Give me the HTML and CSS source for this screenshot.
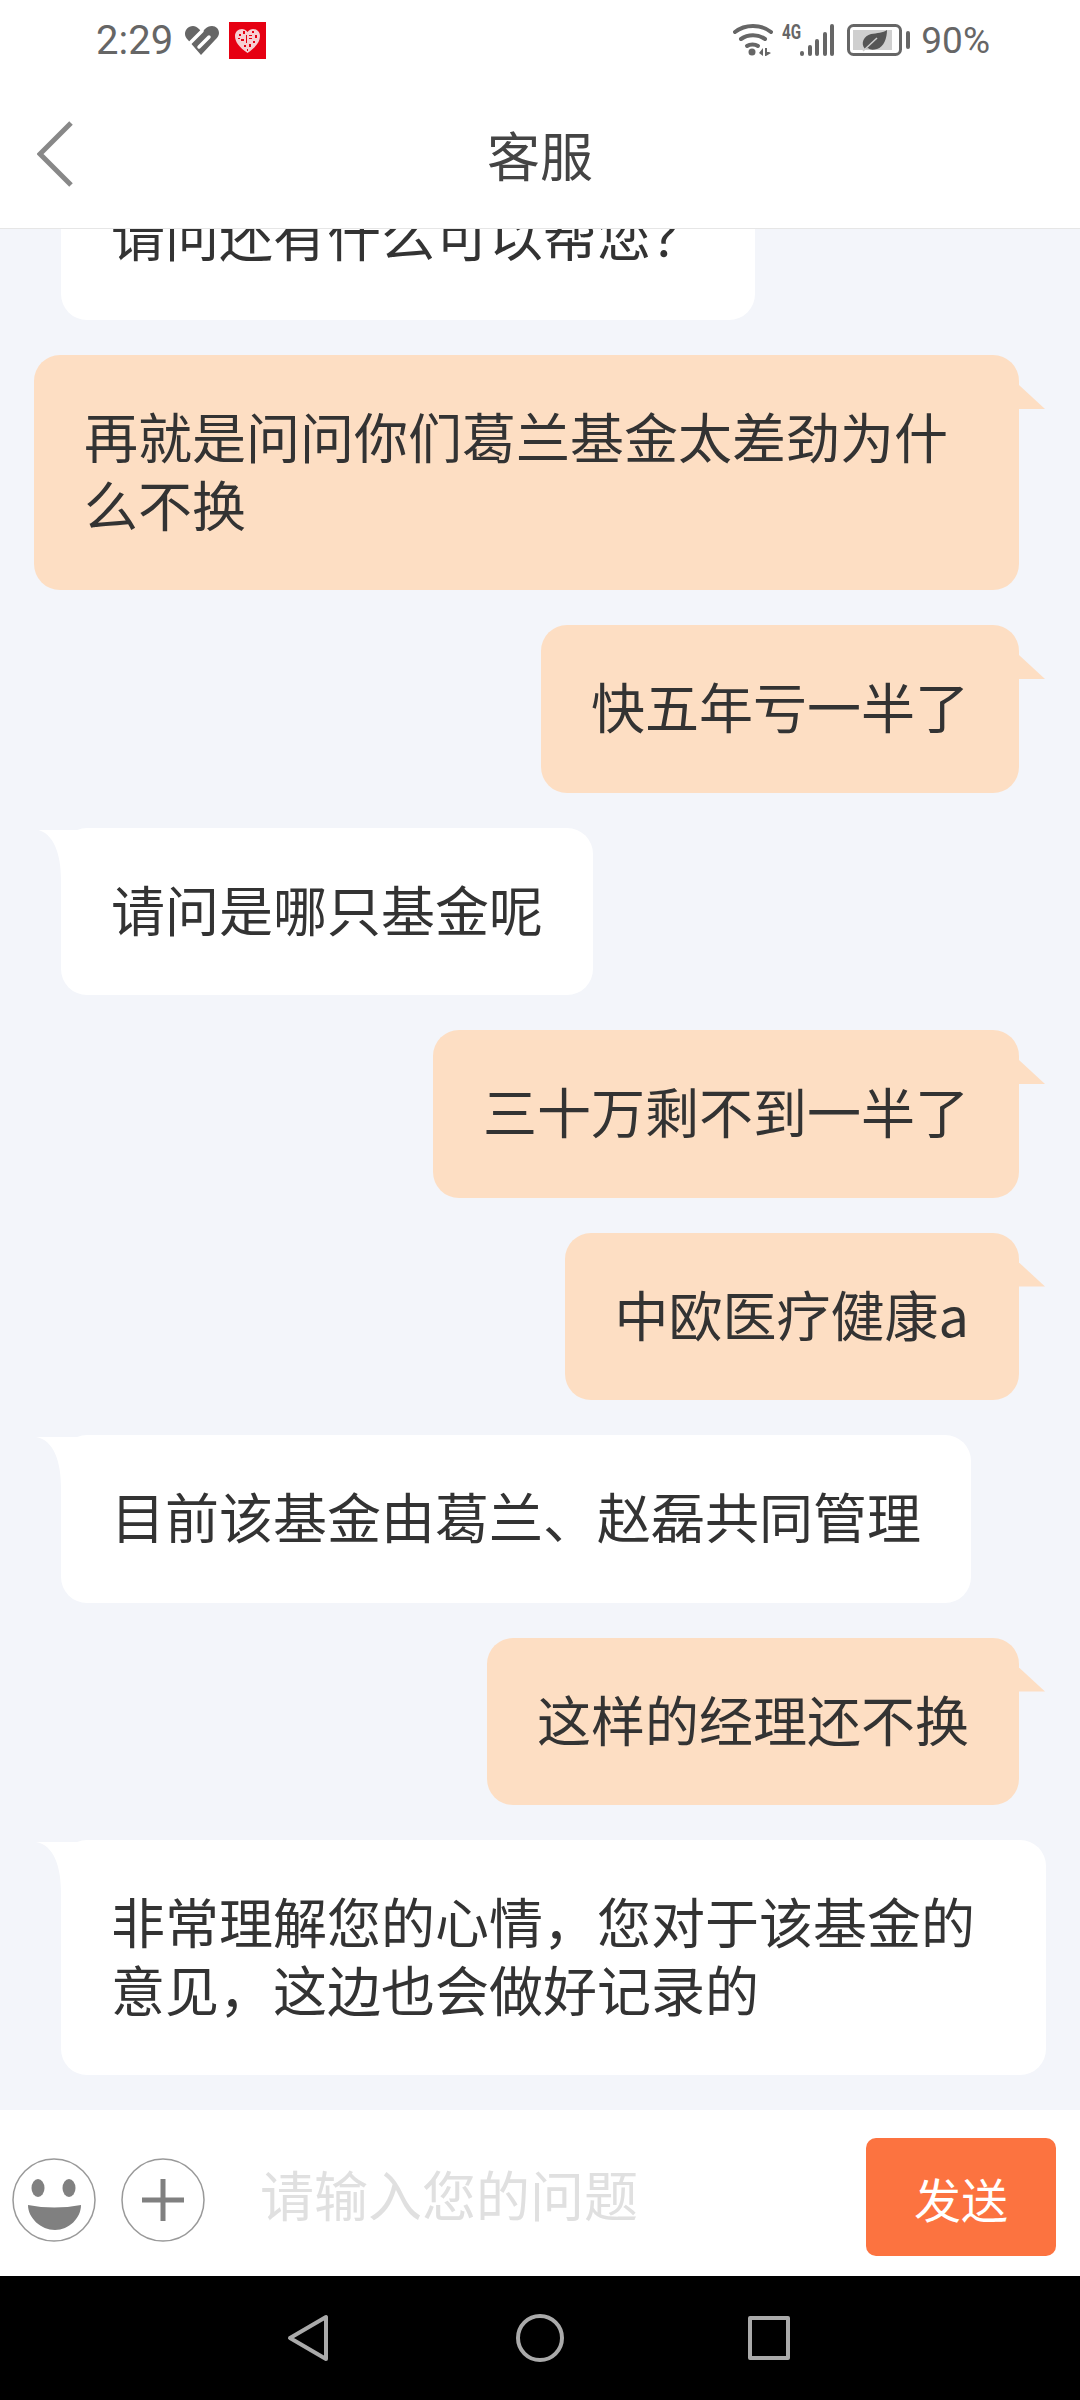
FILE: index.html
```html
<!DOCTYPE html>
<html lang="zh-CN">
<head>
  <meta charset="UTF-8">
  <meta name="viewport" content="width=device-width, initial-scale=1.0">
  <title>客服</title>
  <link rel="stylesheet" href="styles.css">
</head>
<body>
  <div class="phone">
    <div class="statusBar">
      <div class="statusLeft">
        <span class="time">2:29</span>
        <svg class="healthIcon" width="34" height="29" viewBox="0 0 34 29">
          <path d="M8 0C3 0 0 4 0 8c0 2 1 4 3 6l13 15 14-15c3-3 4-5 4-7 0-4-3-7-7-7-3 0-5 1-7 3l-3 3-3-3C12 1 10 0 8 0z" fill="#666"/>
          <path d="M5 17L17 5M14 21l10-10" stroke="#fff" stroke-width="3.500" stroke-linecap="round"/>
        </svg>
        <svg class="appIcon" width="37" height="37" viewBox="0 0 37 37">
          <rect width="37" height="37" fill="#e60012"/>
          <path d="M18.500 31C10 25 6 20 6 14c0-4 3-7 7-7 2 0 4 1 5.500 3C20 8 22 7 24 7c4 0 7 3 7 7 0 6-4 11-12.500 17z" fill="#f6cfd3"/>
          <path d="M10 12h2v2h-2zM14 9h2v3h-2zM12 17h3v2h-3zM17 13h1v8h-1zM20 13h3v1h-3zM20 16h3v1h-3zM23 9h2v2h-2zM26 13h2v3h-2zM24 19h2v2h-2zM15 23h2v2h-2zM20 22h2v3h-2zM18 27h1v2h-1zM9 16h2v1h-2z" fill="#e60012"/>
        </svg>
      </div>
      <div class="statusRight">
        <svg class="wifiIcon" width="40" height="32" viewBox="0 0 40 32">
          <g fill="none" stroke="#666" stroke-width="4" stroke-linecap="round">
            <path d="M2 8c10-8 26-8 36 0"/>
            <path d="M8 15c7-5 17-5 24 0"/>
            <path d="M14 22c3-2 8-2 11 0"/>
          </g>
          <circle cx="19" cy="28" r="3.500" fill="#666"/>
          <path d="M30 24v8l-4-3zM32 24v8h1l5-3-2-1h-2v-4z" fill="#666"/>
        </svg>
        <span class="netLabel">4G</span>
        <div class="signal">
          <i class="bar1"></i><i class="bar2"></i><i class="bar3"></i><i class="bar4"></i><i class="bar5"></i>
        </div>
        <svg class="batteryIcon" width="64" height="32" viewBox="0 0 64 32">
          <rect x="1.500" y="1.500" width="52" height="29" rx="5" fill="none" stroke="#666" stroke-width="3"/>
          <rect x="6" y="6" width="39" height="20" fill="#cfcfcf"/>
          <path d="M18 25c-5-6-1-13 6-15 6-1 12-1 16-4 0 8-3 17-10 19-4 1-7 1-9-1z" fill="#555"/>
          <path d="M16 27l14-13" stroke="#cfcfcf" stroke-width="1.500"/>
          <rect x="59" y="7" width="4" height="18" rx="2" fill="#666"/>
        </svg>
        <span class="battery">90%</span>
      </div>
    </div>
    <header class="navBar">
      <svg class="backIcon" width="36" height="66" viewBox="0 0 36 66">
        <path d="M34 2L3 33l31 31" fill="none" stroke="#888" stroke-width="5"/>
      </svg>
      <h1 class="navTitle">客服</h1>
    </header>
    <main class="chat">
      <div class="bubble left noTail">请问还有什么可以帮您？</div>
      <div class="bubble right">再就是问问你们葛兰基金太差劲为什么不换</div>
      <div class="bubble right">快五年亏一半了</div>
      <div class="bubble left">请问是哪只基金呢</div>
      <div class="bubble right">三十万剩不到一半了</div>
      <div class="bubble right">中欧医疗健康a</div>
      <div class="bubble left">目前该基金由葛兰、赵磊共同管理</div>
      <div class="bubble right">这样的经理还不换</div>
      <div class="bubble left">非常理解您的心情，您对于该基金的意见，这边也会做好记录的</div>
    </main>
    <footer class="inputBar">
      <svg class="roundIcon" width="84" height="84" viewBox="0 0 84 84">
        <circle cx="42" cy="42" r="41" fill="#fff" stroke="#999" stroke-width="1.500"/>
        <ellipse cx="26" cy="30" rx="6.500" ry="9" fill="#808080"/>
        <ellipse cx="57" cy="30" rx="6.500" ry="9" fill="#808080"/>
        <path d="M16 47q26 5 53 0c0 13-12 25-26 25S16 60 16 47z" fill="#808080"/>
      </svg>
      <svg class="roundIcon plus" width="84" height="84" viewBox="0 0 84 84">
        <circle cx="42" cy="42" r="41" fill="#fff" stroke="#999" stroke-width="1.500"/>
        <path d="M42 21v42M21 42h42" stroke="#808080" stroke-width="5"/>
      </svg>
      <div class="placeholder">请输入您的问题</div>
      <button class="sendButton">发送</button>
    </footer>
    <nav class="softKeys">
      <svg width="42" height="48" viewBox="0 0 42 48">
        <path d="M39 3v42L3 24z" fill="none" stroke="#aaa" stroke-width="4" stroke-linejoin="round"/>
      </svg>
      <svg width="48" height="48" viewBox="0 0 48 48">
        <circle cx="24" cy="24" r="22" fill="none" stroke="#aaa" stroke-width="4"/>
      </svg>
      <svg class="recentKey" width="42" height="44" viewBox="0 0 42 44">
        <rect x="2" y="2" width="38" height="40" fill="none" stroke="#aaa" stroke-width="4" stroke-linejoin="round"/>
      </svg>
    </nav>
  </div>
</body>
</html>
```

FILE: styles.css
```css
* {
  margin: 0;
  padding: 0;
  box-sizing: border-box;
}
body {
  width: 1080px;
  height: 2400px;
  overflow: hidden;
  font-family: "Noto Sans CJK SC", "Noto Sans", sans-serif;
  color: #333;
  background-color: #fff;
}
.phone {
  display: flex;
  flex-direction: column;
  height: 2400px;
}
.statusBar {
  height: 80px;
  flex-shrink: 0;
  display: flex;
  align-items: center;
  justify-content: space-between;
  padding: 0 90px 0 96px;
  color: #666;
  font-family: "Roboto", sans-serif;
}
.statusLeft, .statusRight {
  display: flex;
  align-items: center;
}
.time {
  font-size: 40px;
  margin-right: 12px;
}
.appIcon {
  margin-left: 10px;
}
.netLabel {
  font-size: 16px;
  line-height: 16px;
  font-weight: bold;
  align-self: flex-start;
  margin: 3px 0 0 9px;
  width: 18px;
  transform: scale(0.95, 1.3);
  transform-origin: left top;
}
.signal {
  display: flex;
  align-items: flex-end;
  gap: 3.500px;
  height: 32px;
  margin-right: 13px;
}
.signal i {
  display: block;
  width: 4px;
  border-radius: 2px;
  background-color: #666;
}
.signal .bar1 { height: 5px; }
.signal .bar2 { height: 11px; }
.signal .bar3 { height: 17px; }
.signal .bar4 { height: 24px; }
.signal .bar5 { height: 32px; }
.battery {
  font-size: 37px;
  margin-left: 10px;
}
.navBar {
  height: 149px;
  flex-shrink: 0;
  display: flex;
  align-items: center;
  justify-content: center;
  position: relative;
  border-bottom: 1px solid #e6e6e6;
  background-color: #fff;
}
.backIcon {
  position: absolute;
  left: 37px;
  top: 41px;
}
.navTitle {
  font-size: 53px;
  font-weight: normal;
  color: #444;
}
.chat {
  flex: 1;
  min-height: 0;
  overflow: hidden;
  display: flex;
  flex-direction: column;
  justify-content: flex-end;
  gap: 35px;
  padding: 0 34px 35px;
  background-color: #f3f5fa;
}
.bubble {
  flex-shrink: 0;
  position: relative;
  max-width: 985px;
  padding: 47px 50px 53px;
  border-radius: 26px;
  font-size: 54px;
  line-height: 67.500px;
  color: #333;
}
.bubble.right {
  align-self: flex-end;
  margin-right: 27px;
  background-color: #fddec3;
}
.bubble.left {
  align-self: flex-start;
  margin-left: 27px;
  background-color: #fff;
}
.bubble.right::after {
  content: "";
  position: absolute;
  top: 30px;
  right: -26px;
  width: 26px;
  height: 24px;
  background-color: #fddec3;
  clip-path: polygon(0 0, 100% 100%, 0 100%);
}
.bubble.left::before {
  content: "";
  position: absolute;
  top: 2px;
  left: -25px;
  width: 50px;
  height: 50px;
  background-color: #fff;
  clip-path: path("M0 0H50V50H25C25 25 18 3 0 0Z");
}
.bubble.noTail::before {
  display: none;
}
.inputBar {
  height: 166px;
  flex-shrink: 0;
  display: flex;
  align-items: center;
  padding: 0 24px 0 12px;
  background-color: #fff;
}
.roundIcon {
  flex-shrink: 0;
  margin-top: 14px;
}
.plus {
  margin-left: 25px;
}
.placeholder {
  flex: 1;
  margin-left: 55px;
  font-size: 54px;
  color: #e0e0e0;
}
.sendButton {
  width: 190px;
  height: 118px;
  margin-top: 8px;
  border: none;
  border-radius: 10px;
  background-color: #fc7340;
  color: #fff;
  font-family: inherit;
  font-size: 47px;
}
.softKeys {
  height: 124px;
  flex-shrink: 0;
  display: flex;
  align-items: center;
  justify-content: center;
  gap: 187px;
  padding-right: 3px;
  background-color: #000;
}
.recentKey {
  margin-left: -3px;
}
```
